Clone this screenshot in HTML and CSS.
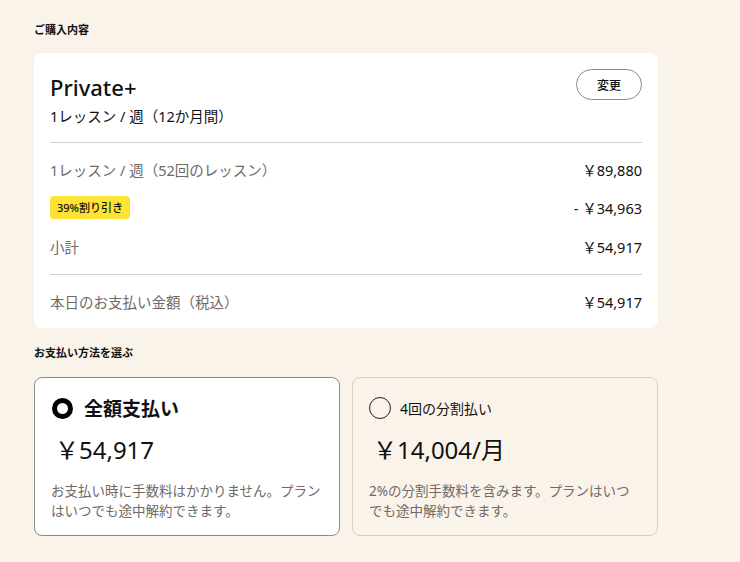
FILE: index.html
```html
<!DOCTYPE html>
<html lang="ja">
<head>
<meta charset="utf-8">
<link rel="stylesheet" href="styles.css">
</head>
<body>
<main class="page">
  <h2 class="section-title">ご購入内容</h2>
  <section class="summary">
    <div class="plan-head">
      <div>
        <div class="plan-name">Private+</div>
        <div class="plan-sub">1レッスン / 週（12か月間）</div>
      </div>
      <button class="change-btn">変更</button>
    </div>
    <div class="rows">
      <div class="row"><span class="label">1レッスン / 週（52回のレッスン）</span><span class="value">￥89,880</span></div>
      <div class="row"><span class="badge">39%割り引き</span><span class="value">- ￥34,963</span></div>
      <div class="row subtotal"><span class="label">小計</span><span class="value">￥54,917</span></div>
    </div>
    <div class="row total"><span class="label">本日のお支払い金額（税込）</span><span class="value">￥54,917</span></div>
  </section>

  <h2 class="section-title pay-title">お支払い方法を選ぶ</h2>
  <div class="options">
    <div class="option selected">
      <div class="opt-head"><span class="radio checked"></span><span class="opt-name">全額支払い</span></div>
      <div class="opt-price">￥54,917</div>
      <p class="opt-desc">お支払い時に手数料はかかりません。プランはいつでも途中解約できます。</p>
    </div>
    <div class="option">
      <div class="opt-head"><span class="radio"></span><span class="opt-name">4回の分割払い</span></div>
      <div class="opt-price">￥14,004/月</div>
      <p class="opt-desc">2%の分割手数料を含みます。プランはいつでも途中解約できます。</p>
    </div>
  </div>
</main>
</body>
</html>
```

FILE: styles.css
```css
* { box-sizing: border-box; }
html, body {
  margin: 0;
  background: #faf3ea;
  font-family: "Noto Sans", "Noto Sans CJK JP", sans-serif;
  color: #111;
}
.page {
  width: 692px;
  padding: 21px 34px 0;
}
.section-title {
  margin: 0;
  font-size: 11px;
  line-height: 18px;
  font-weight: 700;
}
.summary {
  margin-top: 14px;
  background: #fff;
  border-radius: 8px;
  padding: 19px 16px 15px;
}
.plan-head {
  display: flex;
  justify-content: space-between;
  align-items: flex-start;
  padding-bottom: 15px;
  border-bottom: 1px solid #d3cfcb;
}
.plan-name {
  font-size: 22px;
  line-height: 30px;
  font-weight: 500;
}
.plan-sub {
  margin-top: 3px;
  font-size: 14.5px;
  line-height: 22px;
}
.change-btn {
  margin-top: -3px;
  width: 66px;
  height: 31px;
  border: 1px solid #8f8b88;
  border-radius: 16px;
  background: #fff;
  font-family: inherit;
  font-size: 12px;
  font-weight: 500;
  color: #111;
  padding: 0;
}
.rows {
  display: flex;
  flex-direction: column;
  gap: 15px;
  padding: 16px 0 16px;
  border-bottom: 1px solid #d3cfcb;
}
.row {
  display: flex;
  justify-content: space-between;
  align-items: center;
  min-height: 22px;
  font-size: 14.5px;
  line-height: 22px;
}
.subtotal { margin-top: 2px; }
.label { color: #6f6a66; }
.value { color: #111; }
.badge {
  background: #fde334;
  border-radius: 4px;
  font-size: 11px;
  font-weight: 500;
  line-height: 23px;
  padding: 0 7px;
  color: #111;
}
.total { padding-top: 16px; }
.pay-title { margin-top: 16px; }
.options {
  margin-top: 15px;
  display: grid;
  grid-template-columns: 1fr 1fr;
  gap: 12px;
}
.option {
  height: 159px;
  border: 1px solid #d7cfc6;
  border-radius: 8px;
  padding: 17px 16px 14px;
}
.option.selected {
  background: #fff;
  border-color: #8d8985;
}
.opt-head {
  display: flex;
  align-items: center;
  gap: 9px;
  height: 26px;
}
.radio {
  width: 22px;
  height: 22px;
  border-radius: 50%;
  border: 1.5px solid #222;
  flex: none;
}
.radio.checked {
  width: 21px;
  height: 21px;
  border: 5.5px solid #000;
  margin-left: 1px;
  margin-right: 2px;
}
.opt-name {
  font-size: 14px;
}
.selected .opt-name {
  font-size: 19px;
  font-weight: 700;
}
.opt-price {
  margin-top: 13px;
  font-size: 24px;
  line-height: 32px;
  padding-left: 4px;
}
.opt-desc {
  margin: 15px 0 0;
  font-size: 13.5px;
  line-height: 20px;
  color: #6f6a66;
}
```
